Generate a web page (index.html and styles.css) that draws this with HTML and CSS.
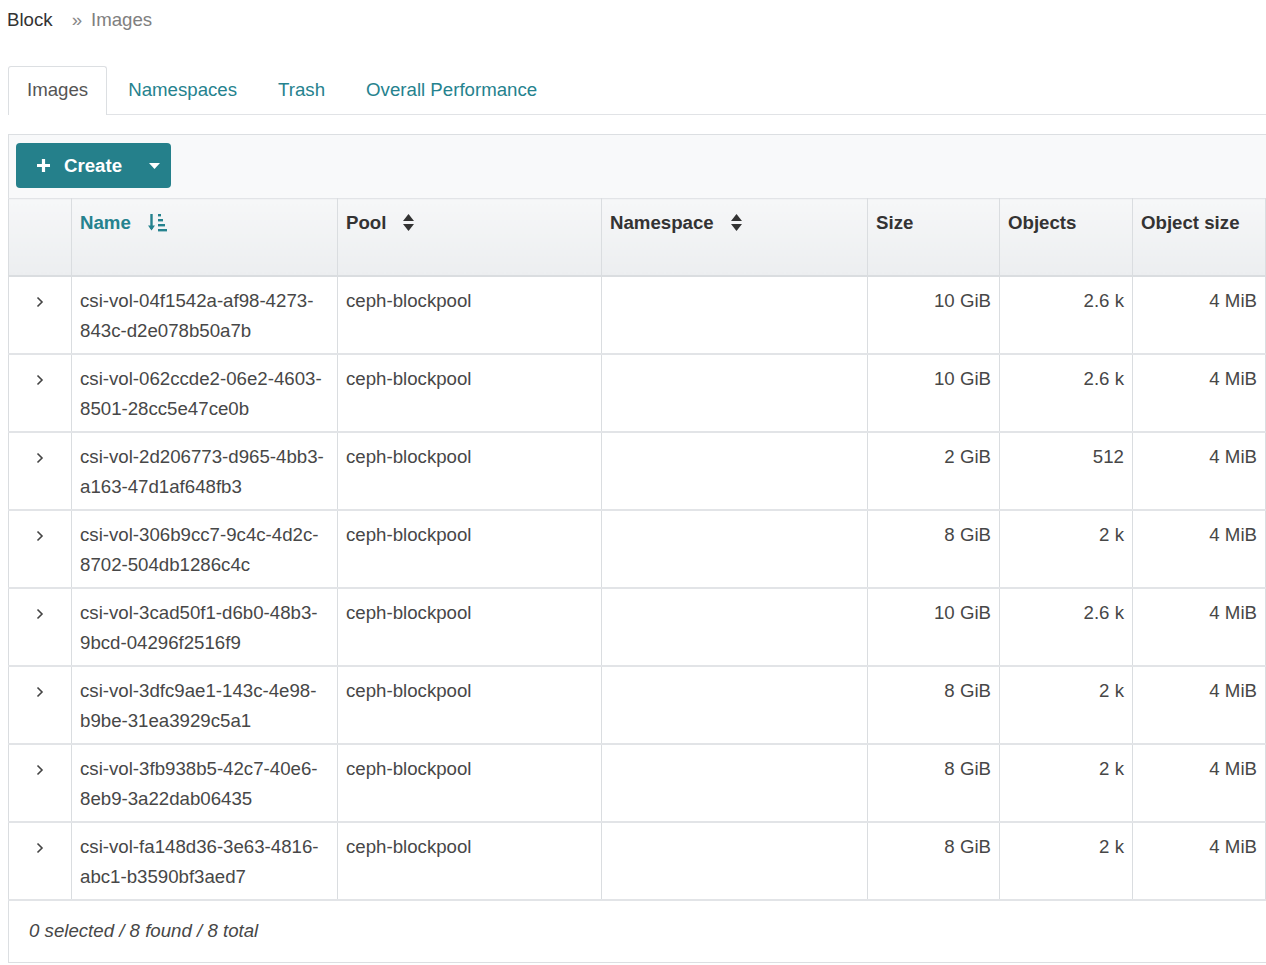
FILE: index.html
```html
<!DOCTYPE html>
<html>
<head>
<meta charset="utf-8">
<link rel="stylesheet" href="styles.css">
</head>
<body>
<div class="page">
  <nav class="crumbs">
    <span class="crumb-first">Block</span>
    <span class="crumb-sep">»</span>
    <span class="crumb-cur">Images</span>
  </nav>

  <ul class="tabs">
    <li class="tab active">Images</li>
    <li class="tab">Namespaces</li>
    <li class="tab">Trash</li>
    <li class="tab">Overall Performance</li>
  </ul>

  <div class="card">
    <div class="toolbar">
      <button class="btn-create">
        <svg class="plus" width="15" height="15" viewBox="0 0 15 15"><path d="M7.5 1v13M1 7.5h13" stroke="#fff" stroke-width="3.2" stroke-linecap="butt"/></svg>
        <span class="btn-label">Create</span>
        <svg class="caret" width="11" height="6" viewBox="0 0 11 6"><path d="M0 0h11L5.5 6z" fill="#fff"/></svg>
      </button>
    </div>

    <table class="grid">
      <colgroup>
        <col class="c-exp"><col class="c-name"><col class="c-pool"><col class="c-ns"><col class="c-size"><col class="c-obj"><col class="c-osize">
      </colgroup>
      <thead>
        <tr>
          <th></th>
          <th class="sorted"><span class="th-in">Name
            <svg class="sort-amt" width="19" height="19" viewBox="0 0 19 19"><path d="M3.5 1v15" stroke="#25828e" stroke-width="2.4"/><path d="M0 12.5l3.5 5 3.5-5z" fill="#25828e"/><rect x="10" y="1" width="3" height="2.4" fill="#25828e"/><rect x="10" y="6" width="5" height="2.4" fill="#25828e"/><rect x="10" y="11" width="7" height="2.4" fill="#25828e"/><rect x="10" y="16" width="9" height="2.4" fill="#25828e"/></svg></span></th>
          <th><span class="th-in">Pool
            <svg class="sort" width="11" height="17" viewBox="0 0 11 17"><path d="M5.5 0L11 7H0z" fill="#333"/><path d="M0 10h11l-5.5 7z" fill="#333"/></svg></span></th>
          <th><span class="th-in">Namespace
            <svg class="sort" width="11" height="17" viewBox="0 0 11 17"><path d="M5.5 0L11 7H0z" fill="#333"/><path d="M0 10h11l-5.5 7z" fill="#333"/></svg></span></th>
          <th>Size</th>
          <th>Objects</th>
          <th>Object size</th>
        </tr>
      </thead>
      <tbody>
        <tr><td class="exp"><svg width="8" height="12" viewBox="0 0 8 12"><path d="M1.5 1.5l4.5 4.5-4.5 4.5" fill="none" stroke="#444" stroke-width="1.6"/></svg></td><td>csi-vol-04f1542a-af98-4273-843c-d2e078b50a7b</td><td>ceph-blockpool</td><td></td><td class="num">10 GiB</td><td class="num">2.6 k</td><td class="num">4 MiB</td></tr>
        <tr><td class="exp"><svg width="8" height="12" viewBox="0 0 8 12"><path d="M1.5 1.5l4.5 4.5-4.5 4.5" fill="none" stroke="#444" stroke-width="1.6"/></svg></td><td>csi-vol-062ccde2-06e2-4603-8501-28cc5e47ce0b</td><td>ceph-blockpool</td><td></td><td class="num">10 GiB</td><td class="num">2.6 k</td><td class="num">4 MiB</td></tr>
        <tr><td class="exp"><svg width="8" height="12" viewBox="0 0 8 12"><path d="M1.5 1.5l4.5 4.5-4.5 4.5" fill="none" stroke="#444" stroke-width="1.6"/></svg></td><td>csi-vol-2d206773-d965-4bb3-a163-47d1af648fb3</td><td>ceph-blockpool</td><td></td><td class="num">2 GiB</td><td class="num">512</td><td class="num">4 MiB</td></tr>
        <tr><td class="exp"><svg width="8" height="12" viewBox="0 0 8 12"><path d="M1.5 1.5l4.5 4.5-4.5 4.5" fill="none" stroke="#444" stroke-width="1.6"/></svg></td><td>csi-vol-306b9cc7-9c4c-4d2c-8702-504db1286c4c</td><td>ceph-blockpool</td><td></td><td class="num">8 GiB</td><td class="num">2 k</td><td class="num">4 MiB</td></tr>
        <tr><td class="exp"><svg width="8" height="12" viewBox="0 0 8 12"><path d="M1.5 1.5l4.5 4.5-4.5 4.5" fill="none" stroke="#444" stroke-width="1.6"/></svg></td><td>csi-vol-3cad50f1-d6b0-48b3-9bcd-04296f2516f9</td><td>ceph-blockpool</td><td></td><td class="num">10 GiB</td><td class="num">2.6 k</td><td class="num">4 MiB</td></tr>
        <tr><td class="exp"><svg width="8" height="12" viewBox="0 0 8 12"><path d="M1.5 1.5l4.5 4.5-4.5 4.5" fill="none" stroke="#444" stroke-width="1.6"/></svg></td><td>csi-vol-3dfc9ae1-143c-4e98-b9be-31ea3929c5a1</td><td>ceph-blockpool</td><td></td><td class="num">8 GiB</td><td class="num">2 k</td><td class="num">4 MiB</td></tr>
        <tr><td class="exp"><svg width="8" height="12" viewBox="0 0 8 12"><path d="M1.5 1.5l4.5 4.5-4.5 4.5" fill="none" stroke="#444" stroke-width="1.6"/></svg></td><td>csi-vol-3fb938b5-42c7-40e6-8eb9-3a22dab06435</td><td>ceph-blockpool</td><td></td><td class="num">8 GiB</td><td class="num">2 k</td><td class="num">4 MiB</td></tr>
        <tr><td class="exp"><svg width="8" height="12" viewBox="0 0 8 12"><path d="M1.5 1.5l4.5 4.5-4.5 4.5" fill="none" stroke="#444" stroke-width="1.6"/></svg></td><td>csi-vol-fa148d36-3e63-4816-abc1-b3590bf3aed7</td><td>ceph-blockpool</td><td></td><td class="num">8 GiB</td><td class="num">2 k</td><td class="num">4 MiB</td></tr>
      </tbody>
    </table>

    <div class="footer">0 selected / 8 found / 8 total</div>
  </div>
</div>
</body>
</html>
```

FILE: styles.css
```css
* { box-sizing: border-box; }
html, body { margin: 0; padding: 0; background: #fff; }
body {
  font-family: "Liberation Sans", Arial, sans-serif;
  font-size: 18.67px;
  line-height: 30px;
  color: #474747;
  overflow: hidden;
}
.page {
  padding-left: 8px;
  width: 1280px;
}
.crumbs {
  padding-top: 5px;
  height: 35px;
  display: flex;
  align-items: center;
  margin-left: -1px;
}
.crumb-first { color: #333; }
.crumb-sep { color: #888; margin-left: 19px; }
.crumb-cur { color: #808080; margin-left: 9px; }

.tabs {
  list-style: none;
  margin: 31px 0 0 0;
  padding: 0;
  display: flex;
  border-bottom: 1px solid #e1e3e6;
  width: 1258px;
}
.tab {
  padding: 8px 19px 9px 20px;
  border: 1px solid transparent;
  border-bottom: none;
  color: #25828e;
  margin-bottom: -1px;
  line-height: 30px;
}
.tab.active {
  color: #555;
  border-color: #dcdfe2;
  border-radius: 3px 3px 0 0;
  background: #fff;
  padding: 8px 18px 10px 18px;
}

.card {
  margin-top: 19px;
  width: 1262px;
  border: 1px solid #dcdfe2;
}
.toolbar {
  background: #f8f9fa;
  padding: 8px 7px 9px;
  height: 63px;
}
.btn-create {
  width: 155px;
  height: 45px;
  border: none;
  border-radius: 4px;
  background: #25808b;
  color: #fff;
  font-family: "Liberation Sans", Arial, sans-serif;
  font-size: 18.67px;
  font-weight: bold;
  display: flex;
  align-items: center;
  padding: 0 0 0 20px;
}
.plus { flex: none; }
.btn-label { margin-left: 13px; }
.caret { margin-left: 27px; flex: none; }

.grid {
  border-collapse: collapse;
  table-layout: fixed;
  width: 1257px;
  margin-left: -1px;
}
.c-exp { width: 63px; }
.c-name { width: 266px; }
.c-pool { width: 264px; }
.c-ns { width: 266px; }
.c-size { width: 132px; }
.c-obj { width: 133px; }
.c-osize { width: 133px; }

.grid th, .grid td {
  border: 1px solid #dadde0;
  vertical-align: top;
  padding: 9px 8px 8px 8px;
  text-align: left;
}
.grid thead th {
  height: 77px;
  font-weight: bold;
  color: #333;
  background: linear-gradient(#f6f7f8, #eceef0);
  border-top: 1px solid #e2e4e7;
  border-bottom: 2px solid #dadde0;
}
.grid thead th.sorted { color: #25828e; }
.th-in { display: inline-flex; align-items: center; }
.sort-amt { margin-left: 17px; margin-top: -2px; }
.sort { margin-left: 17px; margin-top: -2px; }

.grid tbody td {
  height: 76px;
  padding-top: 9px;
  padding-bottom: 7px;
  border-bottom: 2px solid #e2e4e7;
  color: #474747;
}
.grid td.exp {
  text-align: center;
  padding: 9px 0 0 0;
}
.grid td.exp svg { margin-top: 10px; margin-left: 0; }
.grid td.num { text-align: right; }

.footer {
  height: 61px;
  display: flex;
  align-items: center;
  padding-left: 20px;
  font-style: italic;
  color: #474747;
}
```
